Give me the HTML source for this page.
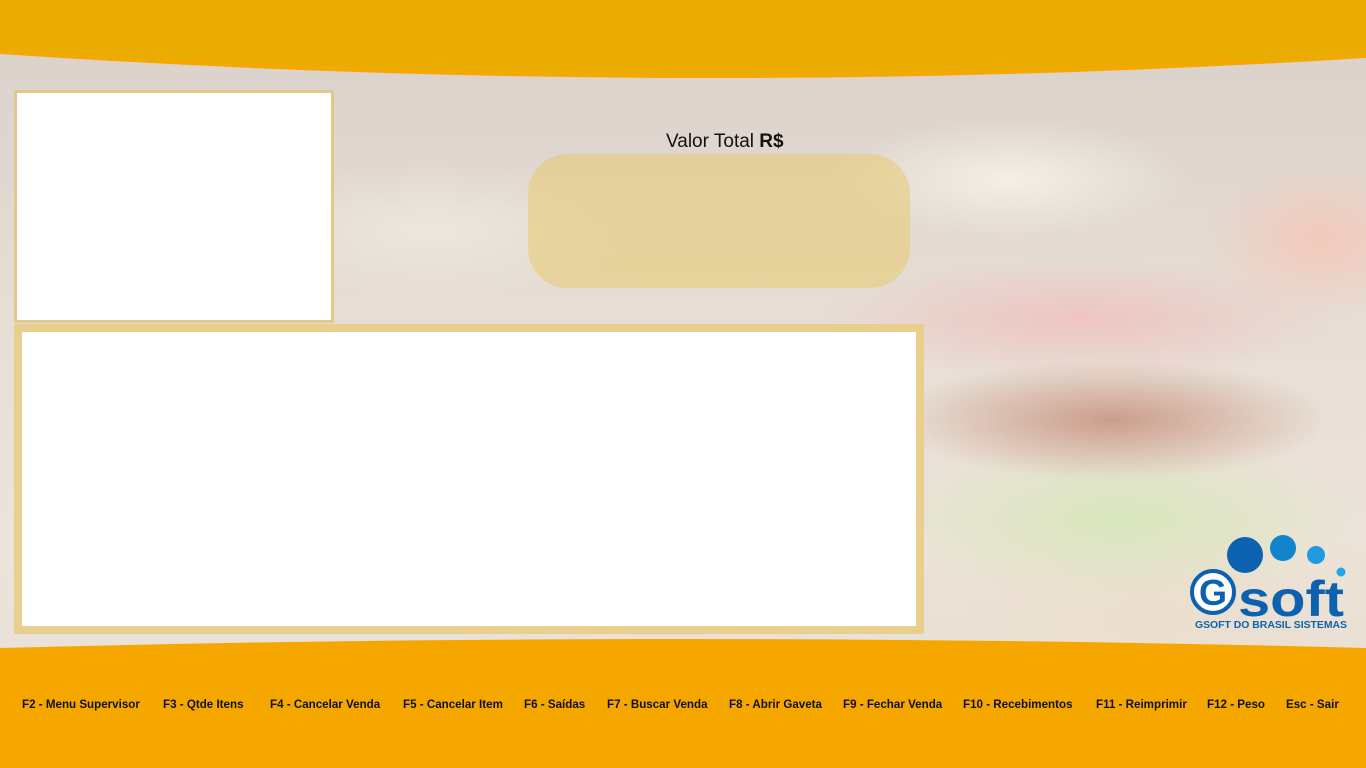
<!DOCTYPE html>
<html><head><meta charset="utf-8"><style>
*{margin:0;padding:0;box-sizing:border-box}
body{width:1366px;height:768px;overflow:hidden;position:relative;font-family:"Liberation Sans",Arial,sans-serif;
background:
radial-gradient(ellipse 180px 60px at 1010px 180px,#f4efe6 0%,rgba(244,239,230,0) 100%),
radial-gradient(ellipse 200px 70px at 430px 230px,#ede7dc 0%,rgba(237,231,220,0) 100%),
radial-gradient(ellipse 260px 60px at 1080px 320px,rgba(240,190,190,.8) 0%,rgba(240,190,190,0) 100%),
radial-gradient(ellipse 220px 60px at 1110px 420px,rgba(200,150,130,.9) 0%,rgba(200,150,130,0) 100%),
radial-gradient(ellipse 240px 80px at 1120px 520px,rgba(215,230,185,.95) 0%,rgba(215,230,185,0) 100%),
radial-gradient(ellipse 120px 80px at 1320px 240px,rgba(245,200,185,.9) 0%,rgba(245,200,185,0) 100%),
radial-gradient(ellipse 300px 120px at 1150px 620px,rgba(235,222,205,1) 0%,rgba(235,222,205,0) 100%),
linear-gradient(180deg,#d8d0ca 0%,#e6ddd4 40%,#ece4da 70%,#e8dfd5 100%);}
.top{position:absolute;left:0;top:0;width:1366px;height:90px}
.box1{position:absolute;left:14px;top:90px;width:320px;height:233px;background:#fff;border:3px solid #e3c88c}
.box2{position:absolute;left:14px;top:324px;width:910px;height:310px;border:8px solid #e8cf8e;background:#fff}
.lbl{position:absolute;left:666px;top:131px;font-size:19px;color:#111}
.pill{position:absolute;left:528px;top:154px;width:382px;height:134px;border-radius:40px;background:rgba(232,200,100,.5)}
.foot{position:absolute;left:0;top:630px;width:1366px;height:138px}
.keys{position:absolute;top:698px;left:0;width:1366px;font-size:11.6px;font-weight:bold;color:#111}
.keys span{position:absolute;white-space:nowrap}
.logo{position:absolute;left:1186px;top:534px}
</style></head><body>
<svg class="top" viewBox="0 0 1366 90"><path d="M0 0H1366V58Q683 100 0 54Z" fill="#f7a800"/><path d="M0 0H1366V55Q683 95 0 51Z" fill="#eaac00"/></svg>
<div class="box1"></div>
<div class="lbl">Valor Total <b>R$</b></div>
<div class="pill"></div>
<div class="box2"></div>
<svg class="foot" viewBox="0 0 1366 138"><path d="M0 18Q683 0 1366 18V138H0Z" fill="#f5a700"/></svg>
<div class="keys">
<span style="left:22px">F2 - Menu Supervisor</span>
<span style="left:163px">F3 - Qtde Itens</span>
<span style="left:270px">F4 - Cancelar Venda</span>
<span style="left:403px">F5 - Cancelar Item</span>
<span style="left:524px">F6 - Saídas</span>
<span style="left:607px">F7 - Buscar Venda</span>
<span style="left:729px">F8 - Abrir Gaveta</span>
<span style="left:843px">F9 - Fechar Venda</span>
<span style="left:963px">F10 - Recebimentos</span>
<span style="left:1096px">F11 - Reimprimir</span>
<span style="left:1207px">F12 - Peso</span>
<span style="left:1286px">Esc - Sair</span>
</div>
<svg class="logo" width="180" height="100" viewBox="0 0 180 100">
<circle cx="59" cy="21" r="18" fill="#0d62b0"/>
<circle cx="97" cy="14" r="13" fill="#1184cc"/>
<circle cx="130" cy="21" r="9" fill="#1f9be0"/>
<circle cx="155" cy="38" r="4.5" fill="#23a5e8"/>
<circle cx="27" cy="58" r="21" fill="#fff" stroke="#0d62b0" stroke-width="4"/>
<text x="27" y="71" text-anchor="middle" font-family="Liberation Sans" font-weight="bold" font-size="36" fill="#0d62b0">G</text>
<text x="52" y="82" font-family="Liberation Sans" font-weight="bold" font-size="50" fill="#0d62b0" textLength="106" lengthAdjust="spacingAndGlyphs">soft</text>
<text x="9" y="94" font-family="Liberation Sans" font-weight="bold" font-size="10.5" fill="#0d62b0" textLength="152" lengthAdjust="spacingAndGlyphs">GSOFT DO BRASIL SISTEMAS</text>
</svg>
</body></html>
